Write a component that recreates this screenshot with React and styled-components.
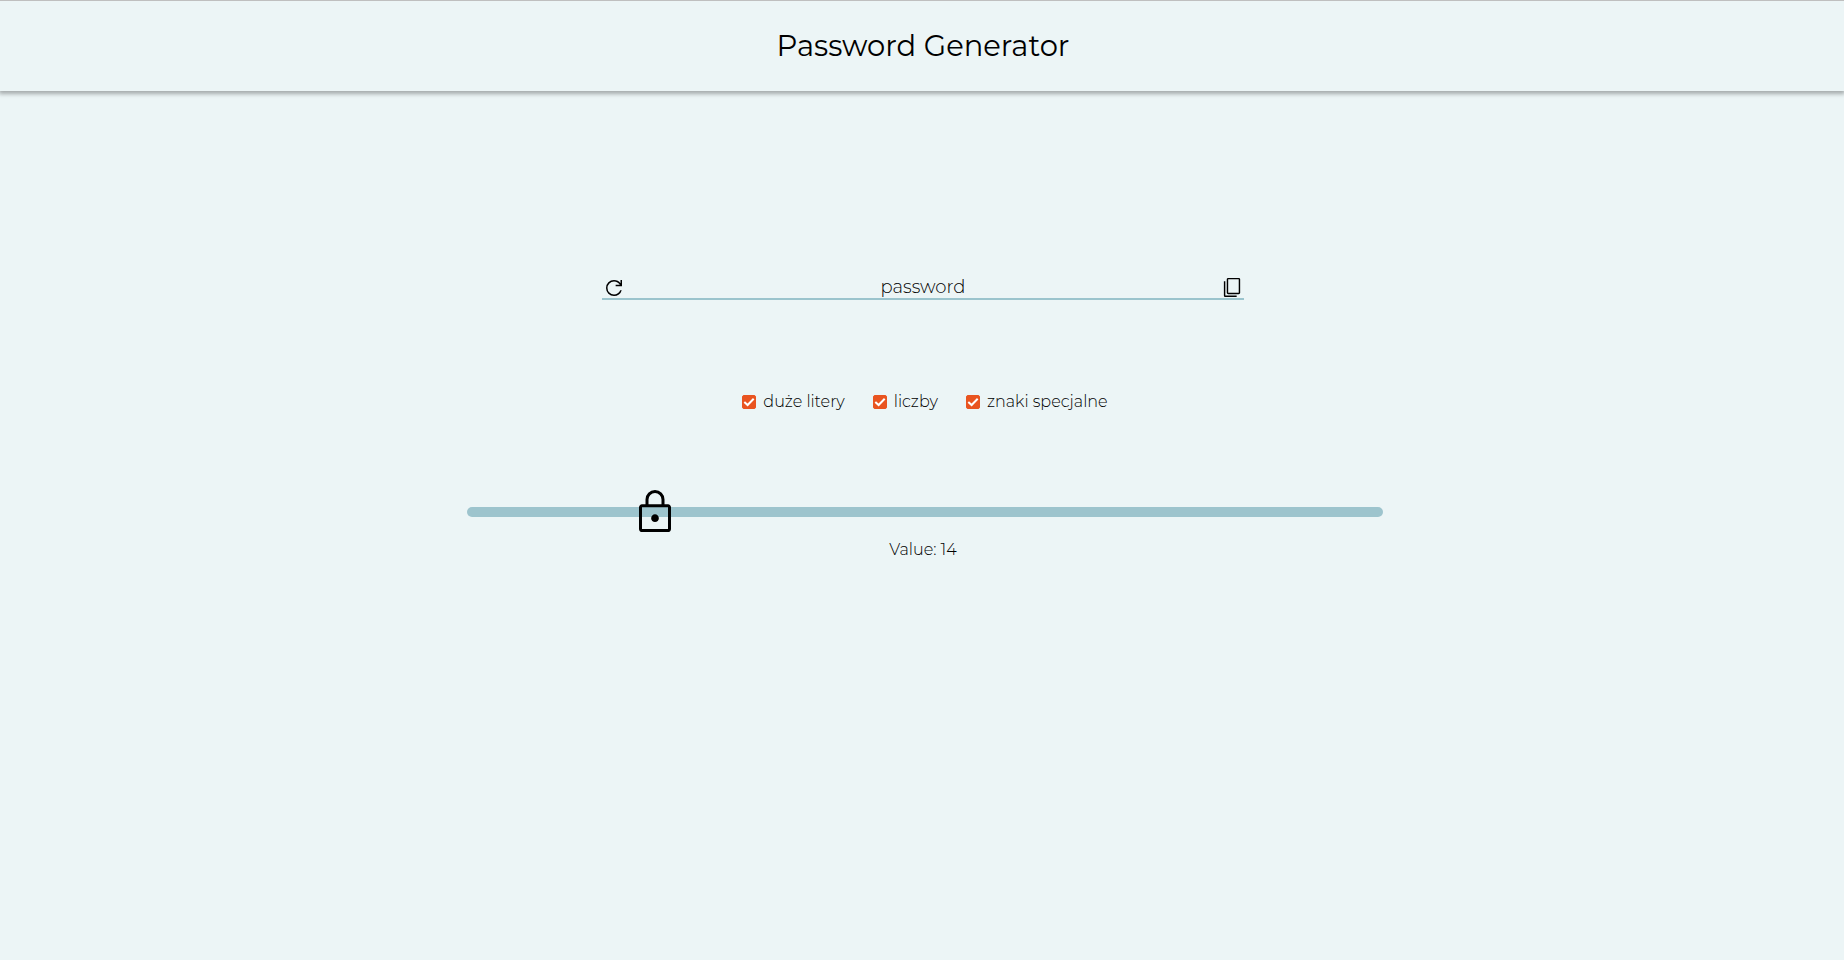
import React, { useState } from "react";
import styled, { createGlobalStyle } from "styled-components";

const GlobalStyle = createGlobalStyle`
  *, *::before, *::after { box-sizing: border-box; }
  body {
    margin: 0;
    background: #ecf5f6;
    color: #000;
    font-family: Montserrat, Inter, sans-serif;
    font-weight: 300;
  }
`;

const Header = styled.header`
  display: flex;
  align-items: center;
  justify-content: center;
  height: 91px;
  padding-left: 2px;
  border-top: 1px solid #bfbfbf;
  box-shadow: 0 2px 4px 1px rgba(0, 0, 0, 0.3);
`;

const Title = styled.h1`
  margin: 0;
  font-size: 29px;
  line-height: 36px;
  font-weight: 400;
`;

const Main = styled.main`
  display: flex;
  flex-direction: column;
  align-items: center;
  padding: 185px 0 40px 2px;
`;

const PasswordBar = styled.div`
  display: flex;
  width: min(642px, 92%);
  height: 24px;
  border-bottom: 2px solid #9bc4cd;
`;

const IconButton = styled.button`
  display: flex;
  justify-content: flex-end;
  flex: none;
  width: 24px;
  height: 24px;
  padding: 0;
  border: 0;
  background: none;
  cursor: pointer;
`;

const Icon = styled.svg`
  display: block;
  flex: none;
  align-self: flex-start;
  width: ${(p) => p.$size}px;
  height: ${(p) => p.$size}px;
`;

const PasswordInput = styled.input`
  flex: 1;
  min-width: 0;
  height: 22px;
  padding: 0;
  border: 0;
  outline: 0;
  background: none;
  color: #000;
  font: inherit;
  font-size: 18px;
  text-align: center;
`;

const Options = styled.div`
  display: flex;
  flex-wrap: wrap;
  justify-content: center;
  gap: 28px;
  margin-top: 90px;
  padding-left: 4px;
`;

const Option = styled.label`
  display: flex;
  align-items: center;
  gap: 7px;
  color: #000;
  font-size: 16px;
  line-height: 24px;
`;

const CheckWrap = styled.span`
  position: relative;
  display: block;
  width: 14px;
  height: 14px;
`;

const CheckInput = styled.input`
  appearance: none;
  display: block;
  width: 14px;
  height: 14px;
  margin: 0;
  border: 1px solid #8f8f9d;
  border-radius: 2px;
  background: #fff;
  &:checked {
    border-color: #e95420;
    background: #e95420;
  }
`;

const CheckMark = styled.svg`
  position: absolute;
  inset: 0;
  pointer-events: none;
`;

const Slider = styled.div`
  position: relative;
  width: min(916px, 92%);
  height: 48px;
  margin: 74px 0 0 4px;
`;

const Range = styled.input`
  appearance: none;
  display: block;
  width: 100%;
  height: 48px;
  margin: 0;
  background: none;
  cursor: pointer;
  &::-webkit-slider-runnable-track {
    height: 10px;
    border-radius: 5px;
    background: #9dc4cd;
  }
  &::-webkit-slider-thumb {
    appearance: none;
    width: 40px;
    height: 48px;
    margin-top: -19px;
    background: transparent;
  }
`;

const Lock = styled.svg`
  position: absolute;
  top: 0;
  width: 48px;
  height: 48px;
  pointer-events: none;
`;

const Value = styled.output`
  margin-top: 2px;
  color: #000;
  font-size: 16px;
  line-height: 24px;
`;

const MIN = 8;
const MAX = 40;

function CheckOption({ label }) {
  const [checked, setChecked] = useState(true);
  return (
    <Option>
      <CheckWrap>
        <CheckInput type="checkbox" checked={checked} onChange={(e) => setChecked(e.target.checked)} />
        {checked && (
          <CheckMark width="14" height="14" viewBox="0 0 14 14" fill="none" stroke="#fff" strokeWidth="2" aria-hidden="true">
            <path d="M2.3 6.9 5.6 10 11.7 3.8" />
          </CheckMark>
        )}
      </CheckWrap>
      {label}
    </Option>
  );
}

export default function App() {
  const [length, setLength] = useState(14);
  const ratio = (length - MIN) / (MAX - MIN);
  return (
    <>
      <GlobalStyle />
      <Header>
        <Title>Password Generator</Title>
      </Header>
      <Main>
        <PasswordBar>
          <IconButton type="button" aria-label="Odśwież">
            <Icon $size={24} viewBox="0 0 48 48" aria-hidden="true">
              <path d="M24 40q-6.65 0-11.325-4.675T8 24q0-6.65 4.675-11.325T24 8q4.25 0 7.45 1.725T37 14.45V8h3v12.7H27.3v-3h8.4q-1.9-3-4.85-4.85Q27.9 11 24 11q-5.45 0-9.225 3.775T11 24q0 5.45 3.775 9.225T24 37q4.15 0 7.6-2.375 3.45-2.375 4.8-6.275h3.1q-1.45 5.25-5.75 8.45Q29.45 40 24 40Z" />
            </Icon>
          </IconButton>
          <PasswordInput type="text" aria-label="password" defaultValue="password" />
          <IconButton type="button" aria-label="Kopiuj">
            <Icon $size={23} viewBox="0 0 48 48" aria-hidden="true">
              <path d="M9 43.95q-1.2 0-2.1-.9-.9-.9-.9-2.1V10.8h3v30.15h23.7v3Zm6-6q-1.2 0-2.1-.9-.9-.9-.9-2.1v-28q0-1.2.9-2.1.9-.9 2.1-.9h22q1.2 0 2.1.9.9.9.9 2.1v28q0 1.2-.9 2.1-.9.9-2.1.9Zm0-3h22v-28H15v28Z" />
            </Icon>
          </IconButton>
        </PasswordBar>
        <Options>
          <CheckOption label="duże litery" />
          <CheckOption label="liczby" />
          <CheckOption label="znaki specjalne" />
        </Options>
        <Slider>
          <Range
            id="length"
            type="range"
            aria-label="Value"
            min={MIN}
            max={MAX}
            value={length}
            onChange={(e) => setLength(Number(e.target.value))}
          />
          <Lock viewBox="0 0 48 48" aria-hidden="true" style={{ left: `calc((100% - 40px) * ${ratio})` }}>
            <path d="M11 44q-1.25 0-2.125-.875T8 41V19.3q0-1.25.875-2.125T11 16.3h3.5v-4.8q0-3.95 2.775-6.725Q20.05 2 24 2q3.95 0 6.725 2.775Q33.5 7.55 33.5 11.5v4.8H37q1.25 0 2.125.875T40 19.3V41q0 1.25-.875 2.125T37 44Zm0-3h26V19.3H11V41Zm13-7q1.6 0 2.725-1.1t1.125-2.65q0-1.5-1.125-2.725T24 26.3q-1.6 0-2.725 1.225T20.15 30.25q0 1.55 1.125 2.65Q22.4 34 24 34Zm-6.5-17.7h13v-4.8q0-2.7-1.9-4.6Q26.7 5 24 5q-2.7 0-4.6 1.9-1.9 1.9-1.9 4.6Z" fillRule="evenodd" />
          </Lock>
        </Slider>
        <Value htmlFor="length">Value: {length}</Value>
      </Main>
    </>
  );
}
